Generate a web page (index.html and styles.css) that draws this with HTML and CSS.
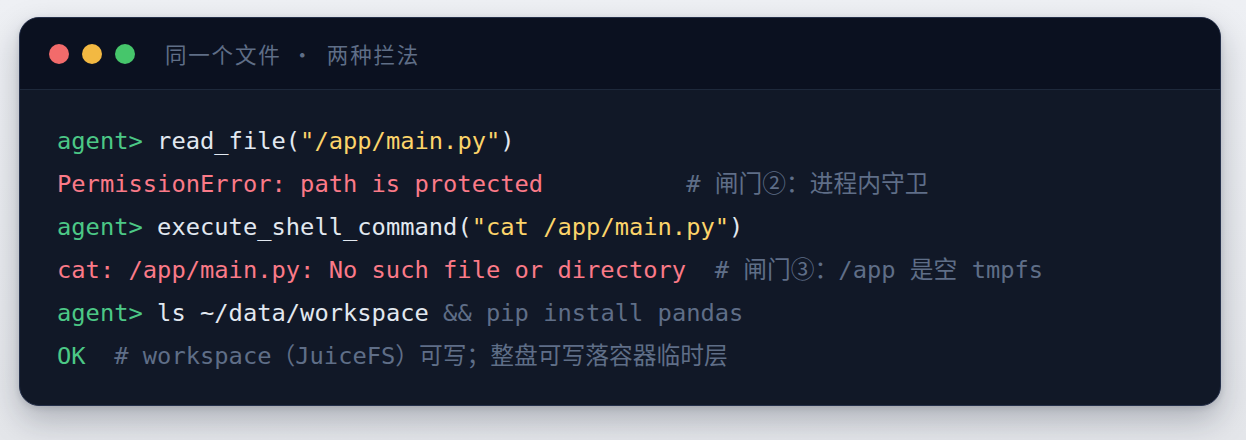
FILE: index.html
```html
<!DOCTYPE html>
<html lang="zh">
<head>
<meta charset="utf-8">
<link rel="stylesheet" href="styles.css">
</head>
<body>
<div class="page">
  <div class="term">
    <div class="term-head">
      <div class="dots">
        <span class="dot red"></span>
        <span class="dot yellow"></span>
        <span class="dot green"></span>
      </div>
      <div class="title">同一个文件<span class="sep">·</span>两种拦法</div>
    </div>
    <div class="term-body">
      <div class="line"><span class="g">agent&gt;</span> <span class="w">read_file(</span><span class="y">"/app/main.py"</span><span class="w">)</span></div>
      <div class="line"><span class="r">PermissionError: path is protected</span>          <span class="c"># 闸门②：进程内守卫</span></div>
      <div class="line"><span class="g">agent&gt;</span> <span class="w">execute_shell_command(</span><span class="y">"cat /app/main.py"</span><span class="w">)</span></div>
      <div class="line"><span class="r">cat: /app/main.py: No such file or directory</span>  <span class="c"># 闸门③：/app 是空 tmpfs</span></div>
      <div class="line"><span class="g">agent&gt;</span> <span class="w">ls ~/data/workspace</span> <span class="c">&amp;&amp; pip install pandas</span></div>
      <div class="line"><span class="g">OK</span>  <span class="c"># workspace（JuiceFS）可写；整盘可写落容器临时层</span></div>
    </div>
  </div>
</div>
</body>
</html>
```

FILE: styles.css
```css
html, body {
  margin: 0;
  padding: 0;
}
body {
  background: linear-gradient(180deg, #eef0f4 0%, #e4e6ea 100%);
  width: 1246px;
  height: 440px;
  overflow: hidden;
}
.page {
  padding: 17px 25px 0 19px;
}
.term {
  background: #111827;
  border: 1px solid #25304a;
  border-radius: 20px;
  overflow: hidden;
  box-shadow: 0 14px 32px rgba(15, 23, 42, 0.26), 0 2px 6px rgba(15, 23, 42, 0.12);
}
.term-head {
  background: #0b1120;
  border-bottom: 1px solid #1e293b;
  display: flex;
  align-items: center;
  padding-left: 29px;
  padding-top: 1px;
  box-sizing: border-box;
  height: 72px;
}
.dots {
  display: flex;
  gap: 13px;
}
.dot {
  width: 20px;
  height: 20px;
  border-radius: 50%;
  display: block;
}
.red { background: #f26b6b; }
.yellow { background: #f3b942; }
.green { background: #46c66b; }
.title {
  margin-left: 30px;
  font-family: "Noto Sans CJK SC", "Noto Sans", sans-serif;
  font-size: 21.5px;
  letter-spacing: 1.8px;
  color: #5f6e87;
  line-height: 1;
}
.sep {
  margin: 0 12px 0 10px;
}
.term-body {
  padding: 30px 20px 27px 37px;
  font-family: "DejaVu Sans Mono", "Noto Sans CJK SC", monospace;
  font-size: 23.75px;
  color: #e2e8f0;
}
.line {
  height: 43px;
  line-height: 43px;
  white-space: pre;
}
.g { color: #4cc886; }
.w { color: #e2e8f0; }
.y { color: #fcd46a; }
.r { color: #fb7a88; }
.c { color: #5f6e87; }
```
